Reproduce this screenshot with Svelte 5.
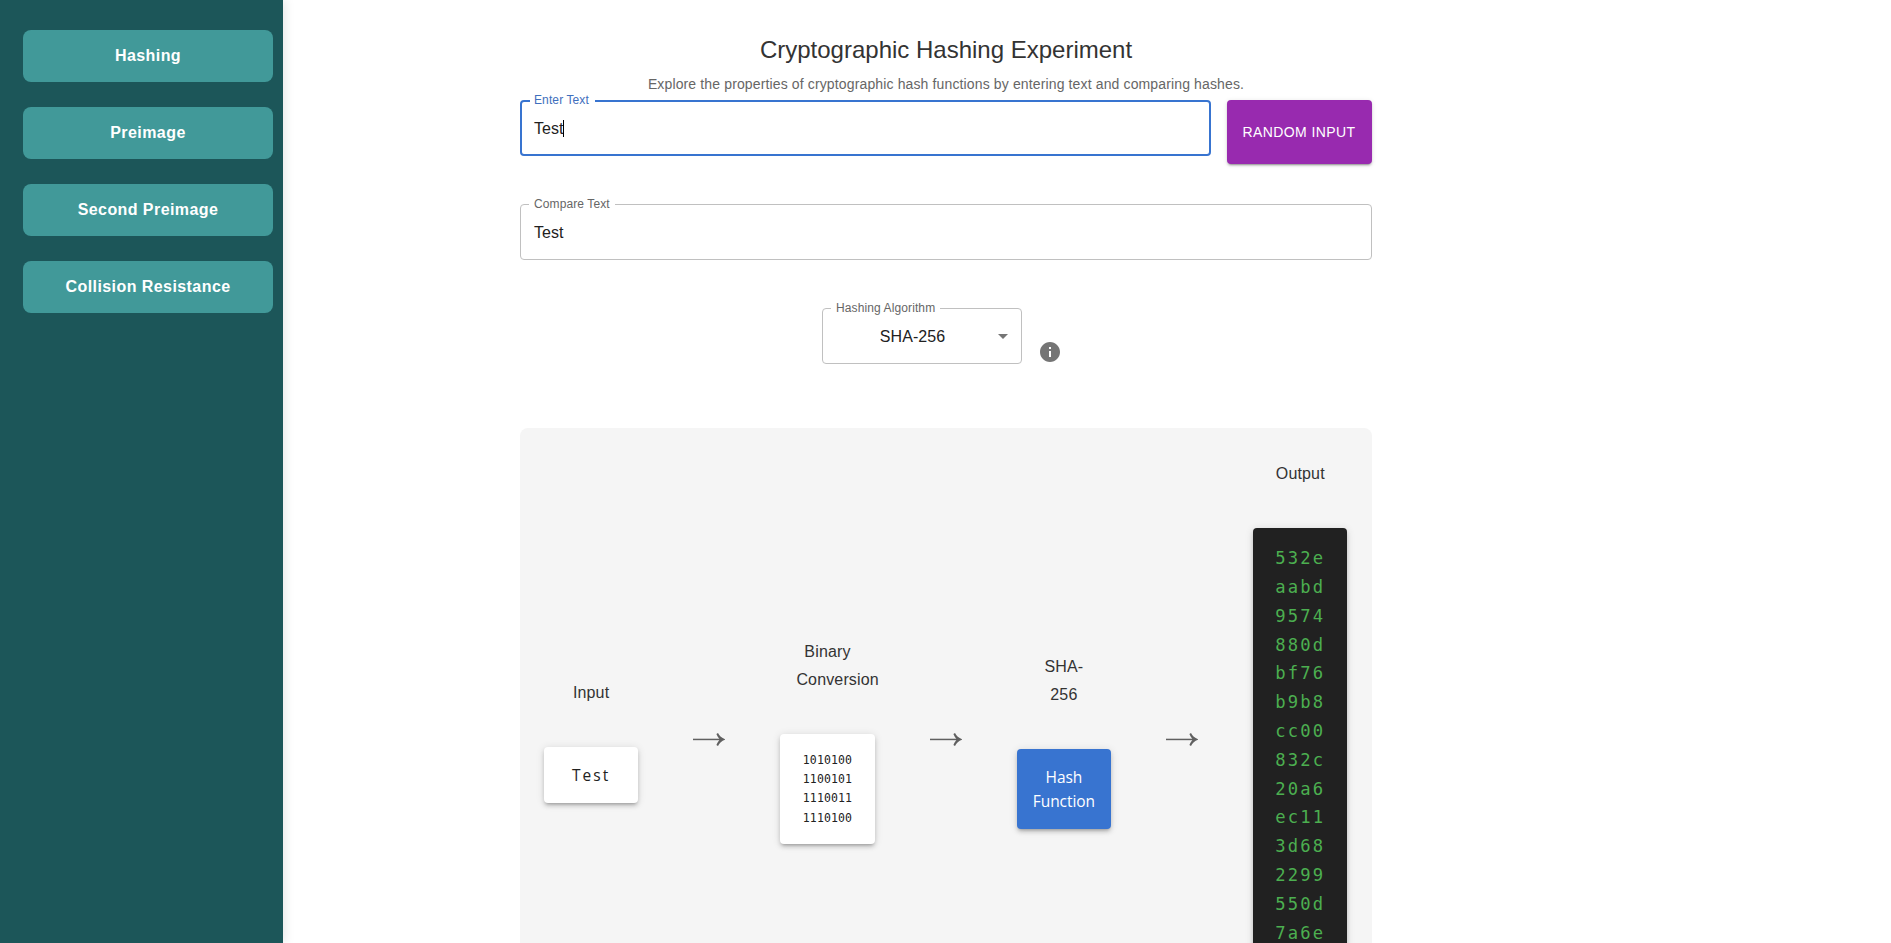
<script>
  const nav = ['Hashing', 'Preimage', 'Second Preimage', 'Collision Resistance'];
  const text = 'Test';
  const bits = ['1010100', '1100101', '1110011', '1110100'];
  const hash = ['532e', 'aabd', '9574', '880d', 'bf76', 'b9b8', 'cc00', '832c', '20a6', 'ec11', '3d68', '2299', '550d', '7a6e'];
</script>

{#snippet arrow()}
  <div class="arrow">
    <svg width="32" height="13" viewBox="0 0 32 13">
      <path d="M0 5.7H28V7.2H0Z" fill="#606060" />
      <path d="M23.4 1L25 0C26.4 2.8 28.7 5 32 6.2V6.8C28.7 8 26.4 10.2 25 13L23.4 12C24.1 10.2 25 8.6 26.2 7.2V5.8C25 4.4 24.1 2.8 23.4 1Z" fill="#606060" />
    </svg>
  </div>
{/snippet}

<div class="page">
  <nav class="sidebar">
    {#each nav as item}
      <button class="nav-item">{item}</button>
    {/each}
  </nav>

  <main>
    <h1>Cryptographic Hashing Experiment</h1>
    <p class="subtitle">Explore the properties of cryptographic hash functions by entering text and comparing hashes.</p>

    <div class="row">
      <div class="field focused">
        <span class="label">Enter Text</span>
        <span class="value">{text}</span><i class="caret"></i>
      </div>
      <button class="random">RANDOM INPUT</button>
    </div>

    <div class="field compare">
      <span class="label">Compare Text</span>
      <span class="value">{text}</span>
    </div>

    <div class="algorithm">
      <div class="field select">
        <span class="label">Hashing Algorithm</span>
        <span class="value">SHA-256</span>
        <svg width="24" height="24" viewBox="0 0 24 24"><path d="M7 10l5 5 5-5z" fill="#757575" /></svg>
      </div>
      <svg class="info" width="24" height="24" viewBox="0 0 24 24">
        <path d="M12 2C6.48 2 2 6.48 2 12s4.48 10 10 10 10-4.48 10-10S17.52 2 12 2zm1 15h-2v-6h2v6zm0-8h-2V7h2v2z" fill="#757575" />
      </svg>
    </div>

    <section class="flow">
      <div class="step">
        <div class="caption">Input</div>
        <div class="box input">{text}</div>
      </div>
      {@render arrow()}
      <div class="step">
        <div class="caption">Binary Conversion</div>
        <div class="box binary">
          {#each bits as b}<div>{b}</div>{/each}
        </div>
      </div>
      {@render arrow()}
      <div class="step">
        <div class="caption">SHA-256</div>
        <div class="box function">Hash<br />Function</div>
      </div>
      {@render arrow()}
      <div class="step">
        <div class="caption">Output</div>
        <div class="box output">
          {#each hash as h}<div>{h}</div>{/each}
        </div>
      </div>
    </section>
  </main>
</div>

<style>
  :global(body) {
    margin: 0;
    overflow: hidden;
    background: #fff;
  }
  .page {
    display: flex;
    height: 943px;
    overflow: hidden;
    font-family: 'Liberation Sans', Arial, sans-serif;
    color: #212121;
  }
  button {
    border: 0;
    font-family: inherit;
    padding: 0;
  }
  .sidebar {
    box-sizing: border-box;
    flex: none;
    width: 283px;
    padding: 30px 10px 0 23px;
    display: flex;
    flex-direction: column;
    gap: 25px;
    background: #1c5659;
    box-shadow: 2px 0 10px rgba(0, 0, 0, 0.1);
  }
  .nav-item {
    flex: none;
    height: 52px;
    border-radius: 8px;
    background: #419999;
    color: #fff;
    font-size: 16px;
    font-weight: bold;
    letter-spacing: 0.43px;
  }
  main {
    box-sizing: border-box;
    width: 852px;
    margin-left: 237px;
    padding-top: 34px;
  }
  h1 {
    margin: 0 0 8px;
    font-size: 24px;
    line-height: 32px;
    font-weight: 400;
    text-align: center;
    color: #333;
  }
  .subtitle {
    margin: 0 0 6px;
    font-size: 14px;
    line-height: 20px;
    letter-spacing: 0.135px;
    text-align: center;
    color: #666;
  }
  .row {
    display: flex;
    gap: 16px;
    align-items: flex-start;
  }
  .field {
    position: relative;
    box-sizing: border-box;
    height: 56px;
    display: flex;
    align-items: center;
    padding: 0 13px;
    border: 1px solid #c0c0c0;
    border-radius: 4px;
    font-size: 16px;
    line-height: 23px;
    letter-spacing: 0.05px;
  }
  .field.focused {
    flex: 1;
    border: 2px solid #3874d0;
    padding: 0 12px;
  }
  .label {
    position: absolute;
    left: 8px;
    top: -8px;
    padding: 0 5px;
    background: #fff;
    font-size: 12px;
    line-height: 15px;
    letter-spacing: 0.11px;
    color: #666;
  }
  .focused .label {
    top: -9px;
    padding: 0 6px 0 4px;
    color: #3f6fbd;
  }
  .focused .value {
    margin-right: -1px;
  }
  .caret {
    width: 1px;
    height: 17px;
    background: #000;
  }
  .random {
    width: 145px;
    height: 64px;
    padding-right: 1px;
    border-radius: 4px;
    background: #982aaf;
    color: #fff;
    font-size: 14px;
    font-weight: 500;
    letter-spacing: 0.4px;
    box-shadow: 0 3px 1px -2px rgba(0, 0, 0, 0.2), 0 2px 2px rgba(0, 0, 0, 0.14), 0 1px 5px rgba(0, 0, 0, 0.12);
  }
  .compare {
    margin-top: 40px;
  }
  .algorithm {
    display: flex;
    margin: 48px 0 64px 302px;
  }
  .select {
    width: 200px;
    padding: 0 6px 0 12px;
  }
  .select .value {
    flex: 1;
    text-align: center;
    padding-right: 1px;
  }
  .info {
    margin: 32px 0 0 16px;
  }
  .flow {
    display: grid;
    grid-template-columns: repeat(7, minmax(0, 1fr));
    column-gap: 24px;
    align-items: center;
    padding: 32px 24.6px 32px 24px;
    background: #f5f5f5;
    border-radius: 8px;
  }
  .caption {
    padding: 0 16px;
    margin-bottom: 40px;
    font-size: 16px;
    line-height: 28px;
    letter-spacing: 0.15px;
    text-align: center;
    color: #333;
  }
  .box {
    padding: 16px 0;
    border-radius: 4px;
    background: #fff;
    text-align: center;
    font-size: 16px;
    line-height: 24px;
    box-shadow: 0 3px 3px -2px rgba(0, 0, 0, 0.2), 0 3px 4px rgba(0, 0, 0, 0.14), 0 1px 8px rgba(0, 0, 0, 0.12);
  }
  .input {
    font-family: 'Open Sans', sans-serif;
    font-size: 15.5px;
    letter-spacing: 2px;
  }
  .binary {
    font-family: 'DejaVu Sans Mono', monospace;
    font-size: 11.5px;
    line-height: 19.2px;
    letter-spacing: 0.13px;
    padding: 17px 0 16px;
  }
  .function {
    font-family: 'Open Sans', sans-serif;
    font-size: 15.5px;
    letter-spacing: -0.05px;
    background: #3874d0;
    color: #fff;
  }
  .output {
    box-sizing: border-box;
    height: 493.7px;
    padding-top: 16.2px;
    font-family: 'DejaVu Sans Mono', monospace;
    font-size: 17.2px;
    line-height: 28.8px;
    letter-spacing: 2.15px;
    background: #212121;
    color: #4caf50;
  }
  .arrow {
    display: flex;
    justify-content: center;
    margin-top: -3px;
  }
</style>
